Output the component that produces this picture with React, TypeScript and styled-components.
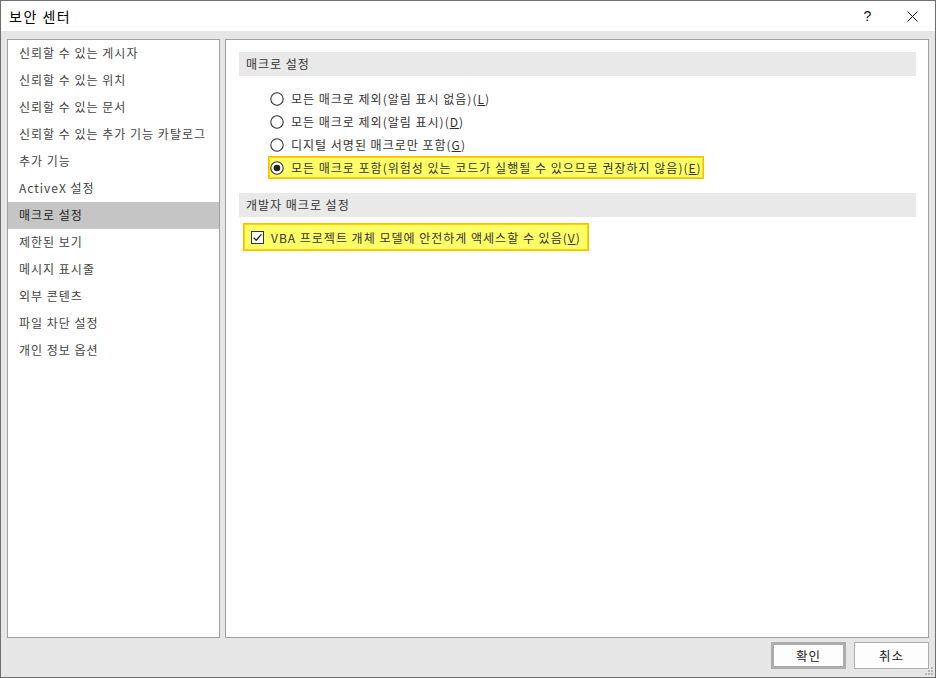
import React from 'react';
import styled, { createGlobalStyle } from 'styled-components';

const GlobalStyle = createGlobalStyle`
  html, body {
    margin: 0;
    padding: 0;
    background: #ffffff;
  }
  * {
    box-sizing: border-box;
  }
`;

const font = `'Noto Sans CJK KR', 'Noto Sans', sans-serif`;

const Window = styled.div`
  width: 936px;
  height: 678px;
  border: 1px solid #6f6f6f;
  display: flex;
  flex-direction: column;
  font-family: ${font};
  font-size: 12px;
  letter-spacing: 1px;
  color: #222;
  background: #e6e6e6;
`;

const TitleBar = styled.div`
  height: 30px;
  background: #ffffff;
  display: flex;
  align-items: center;
  padding-left: 8px;
  font-size: 14px;
  letter-spacing: 1.5px;
  color: #000;
`;

const TitleText = styled.div`
  flex: 1;
`;

const TitleButton = styled.div`
  width: 45px;
  height: 30px;
  display: flex;
  align-items: center;
  justify-content: center;
  font-family: 'Liberation Sans', sans-serif;
  font-size: 14px;
  letter-spacing: 0;
  color: #111;
`;

const Body = styled.div`
  flex: 1;
  display: flex;
  flex-direction: column;
  padding: 8px 6px 8px 6px;
  position: relative;
`;

const Panels = styled.div`
  flex: 1;
  display: flex;
  gap: 5px;
`;

const Panel = styled.div<{ $width?: number }>`
  background: #ffffff;
  border: 1px solid #a0a0a0;
  ${(p) => (p.$width ? `width: ${p.$width}px;` : 'flex: 1;')}
`;

const NavItem = styled.div<{ $active?: boolean }>`
  height: 27px;
  line-height: 26px;
  padding-left: 11px;
  color: ${(p) => (p.$active ? '#222' : '#444')};
  background: ${(p) => (p.$active ? '#c5c5c5' : 'transparent')};
  white-space: nowrap;
`;

const Content = styled.div`
  padding: 12px 12px 0 13px;
  display: flex;
  flex-direction: column;
`;

const SectionHeader = styled.div`
  height: 24px;
  line-height: 23px;
  background: #e9e9e9;
  padding-left: 7px;
  color: #333;
`;

const OptionList = styled.div`
  display: flex;
  flex-direction: column;
  align-items: flex-start;
  padding: 11px 0 14px 29px;
`;

const Option = styled.div<{ $highlight?: boolean; $pad?: number; $h?: number }>`
  height: ${(p) => p.$h ?? 23}px;
  display: flex;
  align-items: center;
  gap: 7px;
  padding: 0 ${(p) => p.$pad ?? 1}px 0 ${(p) => p.$pad ?? 1}px;
  border: 1px solid ${(p) => (p.$highlight ? '#f2c200' : 'transparent')};
  box-shadow: ${(p) => (p.$highlight ? 'inset 0 0 0 1px #ffd400' : 'none')};
  background: ${(p) => (p.$highlight ? '#ffff66' : 'transparent')};
  color: #333;
  white-space: nowrap;
`;

const CheckArea = styled.div`
  display: flex;
  align-items: flex-start;
  padding: 6px 0 0 4px;
`;

const Footer = styled.div`
  display: flex;
  justify-content: flex-end;
  gap: 8px;
  padding-top: 4px;
`;

const Button = styled.div<{ $isDefault?: boolean }>`
  width: 75px;
  height: 27px;
  display: flex;
  align-items: center;
  justify-content: center;
  background: #fdfdfd;
  border: ${(p) => (p.$isDefault ? '3px solid #adadad' : '1px solid #adadad')};
  color: #222;
  font-size: 12.5px;
`;

const Grip = styled.svg`
  position: absolute;
  right: 1px;
  bottom: 1px;
`;

const Radio = ({ checked }: { checked?: boolean }) => (
  <svg width="14" height="14" viewBox="0 0 14 14">
    <circle cx="7" cy="7" r="6.2" fill="#fff" stroke="#333" strokeWidth="1.1" />
    {checked && <circle cx="7" cy="7" r="3.3" fill="#222" />}
  </svg>
);

const Check = () => (
  <svg width="13" height="13" viewBox="0 0 13 13">
    <rect x="0.5" y="0.5" width="12" height="12" fill="#fff" stroke="#333" strokeWidth="1" />
    <path d="M2.6 6.6 L5.2 9.2 L10.4 3.4" fill="none" stroke="#222" strokeWidth="1.3" />
  </svg>
);

const CloseIcon = () => (
  <svg width="11" height="11" viewBox="0 0 11 11">
    <path d="M0.5 0.5 L10.5 10.5 M10.5 0.5 L0.5 10.5" stroke="#111" strokeWidth="1" />
  </svg>
);

const navItems = [
  '신뢰할 수 있는 게시자',
  '신뢰할 수 있는 위치',
  '신뢰할 수 있는 문서',
  '신뢰할 수 있는 추가 기능 카탈로그',
  '추가 기능',
  'ActiveX 설정',
  '매크로 설정',
  '제한된 보기',
  '메시지 표시줄',
  '외부 콘텐츠',
  '파일 차단 설정',
  '개인 정보 옵션',
];

const macroOptions = [
  { label: '모든 매크로 제외(알림 표시 없음)', key: 'L' },
  { label: '모든 매크로 제외(알림 표시)', key: 'D' },
  { label: '디지털 서명된 매크로만 포함', key: 'G' },
  { label: '모든 매크로 포함(위험성 있는 코드가 실행될 수 있으므로 권장하지 않음)', key: 'E' },
];

export default function App() {
  const selected = 3;
  return (
    <>
      <GlobalStyle />
      <Window>
        <TitleBar>
          <TitleText>보안 센터</TitleText>
          <TitleButton>?</TitleButton>
          <TitleButton>
            <CloseIcon />
          </TitleButton>
        </TitleBar>
        <Body>
          <Panels>
            <Panel $width={213}>
              {navItems.map((item) => (
                <NavItem key={item} $active={item === '매크로 설정'}>
                  {item}
                </NavItem>
              ))}
            </Panel>
            <Panel>
              <Content>
                <SectionHeader>매크로 설정</SectionHeader>
                <OptionList>
                  {macroOptions.map((o, i) => (
                    <Option key={o.key} $highlight={i === selected}>
                      <Radio checked={i === selected} />
                      <span>
                        {o.label}(<u>{o.key}</u>)
                      </span>
                    </Option>
                  ))}
                </OptionList>
                <SectionHeader>개발자 매크로 설정</SectionHeader>
                <CheckArea>
                  <Option $highlight $pad={7} $h={28}>
                    <Check />
                    <span>
                      VBA 프로젝트 개체 모델에 안전하게 액세스할 수 있음(<u>V</u>)
                    </span>
                  </Option>
                </CheckArea>
              </Content>
            </Panel>
          </Panels>
          <Footer>
            <Button $isDefault>확인</Button>
            <Button>취소</Button>
          </Footer>
          <Grip width="10" height="10" viewBox="0 0 10 10">
            <rect x="7" y="1" width="2" height="2" fill="#b8b8b8" />
            <rect x="4" y="4" width="2" height="2" fill="#b8b8b8" />
            <rect x="7" y="4" width="2" height="2" fill="#b8b8b8" />
            <rect x="1" y="7" width="2" height="2" fill="#b8b8b8" />
            <rect x="4" y="7" width="2" height="2" fill="#b8b8b8" />
            <rect x="7" y="7" width="2" height="2" fill="#b8b8b8" />
          </Grip>
        </Body>
      </Window>
    </>
  );
}
